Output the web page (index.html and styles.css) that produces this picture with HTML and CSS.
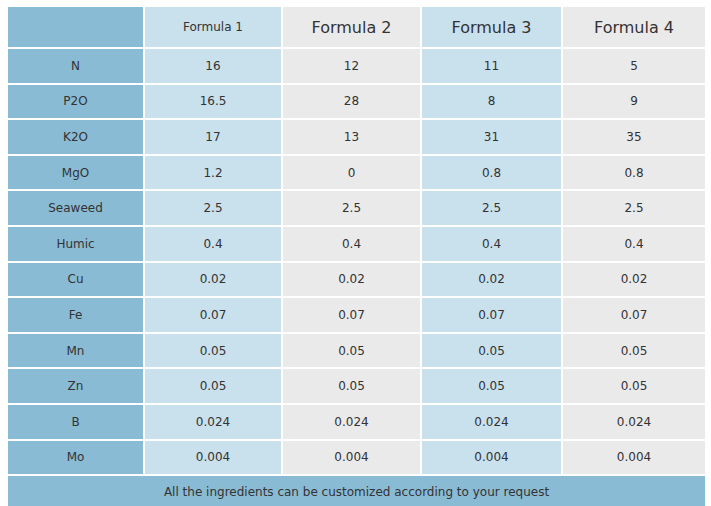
FILE: index.html
```html
<!DOCTYPE html>
<html>
<head>
<meta charset="utf-8">
<link rel="stylesheet" href="styles.css">
</head>
<body>
<table class="formula-table">
  <colgroup>
    <col class="c1"><col class="c2"><col class="c3"><col class="c4"><col class="c5">
  </colgroup>
  <thead>
    <tr class="head-row">
      <th class="label"></th>
      <th class="blue small">Formula 1</th>
      <th class="gray">Formula 2</th>
      <th class="blue">Formula 3</th>
      <th class="gray">Formula 4</th>
    </tr>
  </thead>
  <tbody>
    <tr><td class="label">N</td><td class="blue">16</td><td class="gray">12</td><td class="blue">11</td><td class="gray">5</td></tr>
    <tr><td class="label">P2O</td><td class="blue">16.5</td><td class="gray">28</td><td class="blue">8</td><td class="gray">9</td></tr>
    <tr><td class="label">K2O</td><td class="blue">17</td><td class="gray">13</td><td class="blue">31</td><td class="gray">35</td></tr>
    <tr><td class="label">MgO</td><td class="blue">1.2</td><td class="gray">0</td><td class="blue">0.8</td><td class="gray">0.8</td></tr>
    <tr><td class="label">Seaweed</td><td class="blue">2.5</td><td class="gray">2.5</td><td class="blue">2.5</td><td class="gray">2.5</td></tr>
    <tr><td class="label">Humic</td><td class="blue">0.4</td><td class="gray">0.4</td><td class="blue">0.4</td><td class="gray">0.4</td></tr>
    <tr><td class="label">Cu</td><td class="blue">0.02</td><td class="gray">0.02</td><td class="blue">0.02</td><td class="gray">0.02</td></tr>
    <tr><td class="label">Fe</td><td class="blue">0.07</td><td class="gray">0.07</td><td class="blue">0.07</td><td class="gray">0.07</td></tr>
    <tr><td class="label">Mn</td><td class="blue">0.05</td><td class="gray">0.05</td><td class="blue">0.05</td><td class="gray">0.05</td></tr>
    <tr><td class="label">Zn</td><td class="blue">0.05</td><td class="gray">0.05</td><td class="blue">0.05</td><td class="gray">0.05</td></tr>
    <tr><td class="label">B</td><td class="blue">0.024</td><td class="gray">0.024</td><td class="blue">0.024</td><td class="gray">0.024</td></tr>
    <tr><td class="label">Mo</td><td class="blue">0.004</td><td class="gray">0.004</td><td class="blue">0.004</td><td class="gray">0.004</td></tr>
    <tr class="foot-row"><td class="label" colspan="5">All the ingredients can be customized according to your request</td></tr>
  </tbody>
</table>
</body>
</html>
```
FILE: styles.css
```css
html, body {
  background: #ffffff;
}
body {
  margin: 7px 5px 8px 8px;
  font-family: "DejaVu Sans", Verdana, sans-serif;
  color: #333333;
}
.formula-table {
  width: 698px;
  border-collapse: separate;
  border-spacing: 2px;
  margin: -2px;
  table-layout: fixed;
  font-size: 12px;
}
.c1 { width: 135px; }
.c2 { width: 136px; }
.c3 { width: 137px; }
.c4 { width: 139px; }
.c5 { width: 142px; }
.formula-table th,
.formula-table td {
  padding: 0;
  text-align: center;
  vertical-align: middle;
  font-weight: normal;
}
.formula-table td {
  height: 33.6px;
}
.head-row th {
  height: 40px;
  font-size: 16px;
}
.head-row th.small {
  font-size: 12px;
}
.label { background: #8abbd5; }
.blue { background: #c9e0ed; }
.gray { background: #eaeaea; }
.foot-row td {
  height: 32px;
}
```
